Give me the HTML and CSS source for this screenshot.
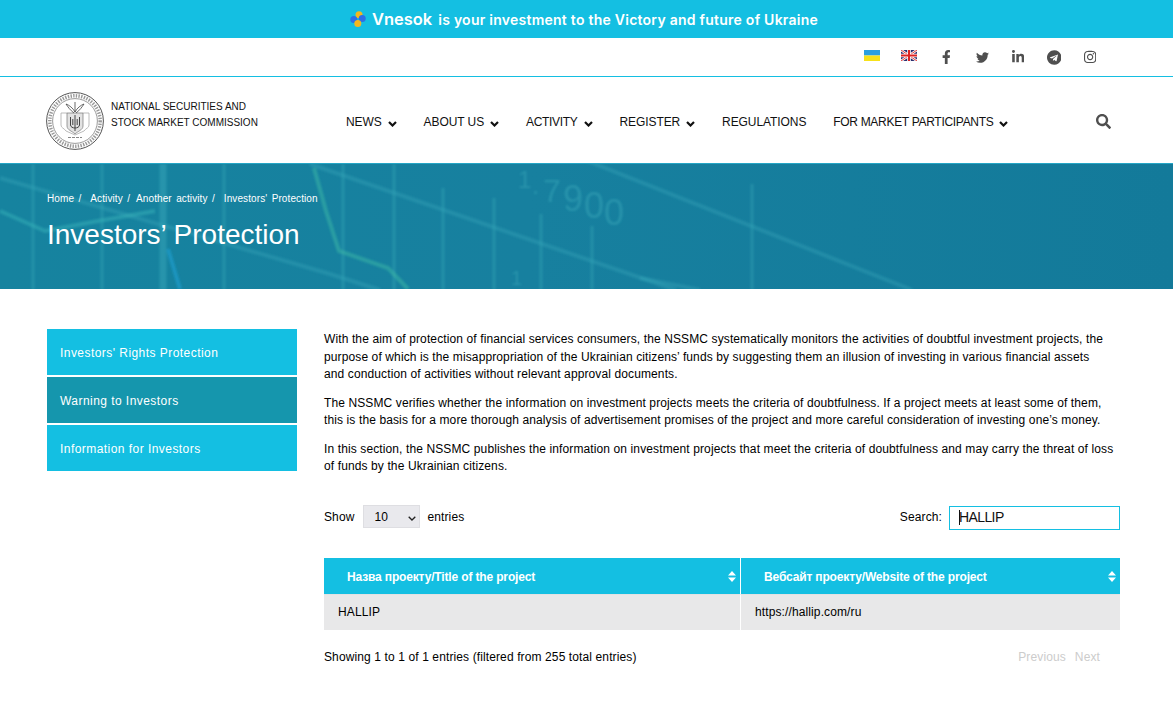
FILE: index.html
```html
<!DOCTYPE html>
<html lang="en">
<head>
<meta charset="utf-8">
<title>Investors' Protection</title>
<link rel="stylesheet" href="styles.css">
</head>
<body>
<div class="banner">
  <svg class="banner-logo" viewBox="0 0 16 16" width="16" height="16"><circle cx="9" cy="3.8" r="3.5" fill="#f4b71e"/><circle cx="3.8" cy="8.600" r="3.500" fill="#2c6fe8"/><circle cx="12.200" cy="7.400" r="3.500" fill="#2c6fe8"/><circle cx="7.800" cy="12.400" r="3.500" fill="#f4b71e"/></svg>
  <span class="banner-brand">Vnesok</span>
  <span class="banner-text">is your investment to the Victory and future of Ukraine</span>
</div>
<div class="topbar">
  <svg class="flag flag-ua" viewBox="0 0 16 11" width="16" height="11"><rect width="16" height="5.5" fill="#2a9fe0"/><rect y="5.5" width="16" height="5.5" fill="#f7e11a"/></svg>
  <svg class="flag flag-uk" viewBox="0 0 16 11" width="16" height="11"><rect width="16" height="11" fill="#2b2f6f"/><path d="M0 0l16 11M16 0L0 11" stroke="#fff" stroke-width="2.4"/><path d="M0 0l16 11M16 0L0 11" stroke="#d22" stroke-width=".9"/><path d="M8 0v11M0 5.5h16" stroke="#fff" stroke-width="3.6"/><path d="M8 0v11M0 5.5h16" stroke="#d22" stroke-width="2"/></svg>
  <a class="social"><svg viewBox="0 0 320 512" height="14"><path d="M279.14 288l14.22-92.66h-88.91v-60.13c0-25.35 12.42-50.06 52.24-50.06h40.42V6.26S260.43 0 225.36 0c-73.22 0-121.08 44.38-121.08 124.72v70.62H22.89V288h81.39v224h100.17V288z"/></svg></a>
  <a class="social"><svg viewBox="0 0 512 512" height="13"><path d="M459.37 151.716c.325 4.548.325 9.097.325 13.645 0 138.72-105.583 298.558-298.558 298.558-59.452 0-114.68-17.219-161.137-47.106 8.447.974 16.568 1.299 25.34 1.299 49.055 0 94.213-16.568 130.274-44.832-46.132-.975-84.792-31.188-98.112-72.772 6.498.974 12.995 1.624 19.818 1.624 9.421 0 18.843-1.3 27.614-3.573-48.081-9.747-84.143-51.98-84.143-102.985v-1.299c13.969 7.797 30.214 12.67 47.431 13.319-28.264-18.843-46.781-51.005-46.781-87.391 0-19.492 5.197-37.36 14.294-52.954 51.655 63.675 129.3 105.258 216.365 109.807-1.624-7.797-2.599-15.918-2.599-24.04 0-57.828 46.782-104.934 104.934-104.934 30.213 0 57.502 12.67 76.67 33.137 23.715-4.548 46.456-13.32 66.599-25.34-7.798 24.366-24.366 44.833-46.132 57.827 21.117-2.273 41.584-8.122 60.426-16.243-14.292 20.791-32.161 39.308-52.628 54.253z"/></svg></a>
  <a class="social"><svg viewBox="0 0 448 512" height="14"><path d="M100.28 448H7.4V148.9h92.88zM53.79 108.1C24.09 108.1 0 83.5 0 53.8a53.79 53.79 0 0 1 107.58 0c0 29.7-24.1 54.3-53.79 54.3zM447.9 448h-92.68V302.4c0-34.7-.7-79.2-48.29-79.2-48.29 0-55.69 37.7-55.69 76.7V448h-92.78V148.9h89.08v40.8h1.3c12.4-23.5 42.69-48.3 87.88-48.3 94 0 111.28 61.9 111.28 142.3V448z"/></svg></a>
  <a class="social"><svg viewBox="0 0 496 512" height="15"><path d="M248 8C111 8 0 119 0 256s111 248 248 248 248-111 248-248S385 8 248 8zm121.8 169.9l-40.7 191.8c-3 13.6-11.1 16.9-22.4 10.5l-62-45.7-29.9 28.8c-3.3 3.3-6.1 6.1-12.5 6.1l4.4-63.1 114.9-103.8c5-4.4-1.1-6.9-7.7-2.5l-142 89.4-61.2-19.1c-13.3-4.2-13.6-13.3 2.8-19.7l239.1-92.2c11.1-4 20.8 2.7 17.2 19.5z"/></svg></a>
  <a class="social"><svg viewBox="0 0 448 512" height="14"><path d="M224.1 141c-63.6 0-114.9 51.3-114.9 114.9s51.3 114.9 114.9 114.9S339 319.5 339 255.9 287.7 141 224.1 141zm0 189.6c-41.1 0-74.7-33.5-74.7-74.7s33.5-74.7 74.7-74.7 74.7 33.5 74.7 74.7-33.6 74.7-74.7 74.7zm146.4-194.3c0 14.9-12 26.8-26.8 26.8-14.9 0-26.8-12-26.8-26.8s12-26.8 26.8-26.8 26.8 12 26.8 26.8zm76.1 27.2c-1.7-35.9-9.9-67.7-36.2-93.9-26.2-26.2-58-34.4-93.9-36.2-37-2.1-147.9-2.1-184.9 0-35.8 1.7-67.6 9.9-93.9 36.1s-34.4 58-36.2 93.9c-2.1 37-2.1 147.9 0 184.9 1.7 35.9 9.9 67.7 36.2 93.9s58 34.4 93.9 36.2c37 2.1 147.9 2.1 184.9 0 35.9-1.7 67.7-9.9 93.9-36.2 26.2-26.2 34.4-58 36.2-93.9 2.1-37 2.1-147.8 0-184.8zM398.8 388c-7.8 19.6-22.9 34.7-42.6 42.6-29.5 11.7-99.5 9-132.1 9s-102.7 2.6-132.1-9c-19.6-7.8-34.7-22.9-42.6-42.6-11.7-29.5-9-99.5-9-132.1s-2.6-102.7 9-132.1c7.8-19.6 22.9-34.7 42.6-42.6 29.5-11.7 99.5-9 132.1-9s102.7-2.6 132.1 9c19.6 7.8 34.7 22.9 42.6 42.6 11.7 29.5 9 99.5 9 132.1s2.7 102.7-9 132.1z"/></svg></a>
</div>
<header class="header">
  <div class="brand">
    <svg class="seal" viewBox="0 0 58 58" width="58" height="58" fill="none" stroke="#555">
      <circle cx="29" cy="29" r="28.400" stroke-width="1"/>
      <circle cx="29" cy="29" r="25.200" stroke-width="3.500" stroke-dasharray="1.400 1.300" stroke="#999"/>
      <circle cx="29" cy="29" r="22.400" stroke-width=".6"/>
      <path d="M15 21h6M37 21h6M15 21v12c0 3 3 3 5 6l9 4 9-4c2-3 5-3 5-6V21" stroke="#aaa" stroke-width=".8"/>
      <path d="M21 21h16v13c0 4-5 5-8 8-3-3-8-4-8-8z" fill="#e2e2e2" stroke="#777" stroke-width=".7"/>
      <path d="M29 23v16M24.500 25v8c0 2 2.500 3 4.500 3s4.500-1 4.500-3v-8M26.800 27v6M31.200 27v6" stroke="#444" stroke-width="1"/>
      <path d="M29 20c-2-4-6-7-9-8 2 3 4 6 8 9M29 20c2-4 6-7 9-8-2 3-4 6-8 9M29 10v10" stroke="#444" stroke-width=".8"/>
      <path d="M22 45.500h14" stroke="#888" stroke-width="1.200" stroke-dasharray="3 1"/>
    </svg>
    <div class="brand-name">NATIONAL SECURITIES AND<br>STOCK MARKET COMMISSION</div>
  </div>
  <nav class="nav">
    <a class="nav-item">NEWS<svg class="chev" viewBox="0 0 9 6" width="9" height="6"><path d="M1 1l3.500 3.500L8 1"/></svg></a>
    <a class="nav-item">ABOUT US<svg class="chev" viewBox="0 0 9 6" width="9" height="6"><path d="M1 1l3.500 3.500L8 1"/></svg></a>
    <a class="nav-item tight">ACTIVITY<svg class="chev" viewBox="0 0 9 6" width="9" height="6"><path d="M1 1l3.500 3.500L8 1"/></svg></a>
    <a class="nav-item">REGISTER<svg class="chev" viewBox="0 0 9 6" width="9" height="6"><path d="M1 1l3.500 3.500L8 1"/></svg></a>
    <a class="nav-item">REGULATIONS</a>
    <a class="nav-item tight">FOR MARKET PARTICIPANTS<svg class="chev" viewBox="0 0 9 6" width="9" height="6"><path d="M1 1l3.500 3.500L8 1"/></svg></a>
  </nav>
  <svg class="search-icon" viewBox="0 0 512 512" width="15" height="15"><path d="M505 442.7L405.3 343c-4.500-4.500-10.600-7-17-7H372c27.600-35.300 44-79.700 44-128C416 93.100 322.900 0 208 0S0 93.100 0 208s93.100 208 208 208c48.300 0 92.700-16.400 128-44v16.300c0 6.400 2.500 12.500 7 17l99.700 99.700c9.400 9.400 24.600 9.400 33.900 0l28.300-28.300c9.400-9.400 9.400-24.600.1-34zM208 336c-70.700 0-128-57.200-128-128 0-70.700 57.200-128 128-128 70.700 0 128 57.200 128 128 0 70.700-57.200 128-128 128z"/></svg>
</header>
<section class="hero">
  <svg class="hero-bg" viewBox="0 0 1173 126" width="1173" height="126" fill="none">
    <defs><filter id="soft" x="-5%" y="-5%" width="110%" height="110%"><feGaussianBlur stdDeviation="0.900"/></filter></defs>
    <g filter="url(#soft)">
      <g stroke="#3fb0bf" stroke-opacity=".32" stroke-width="3">
        <path d="M33 0v126M102 0v126M224 0v126M343 0v126M394 0v126M443 24v102M494 34v92M541 50v76M592 62v64M752 20v106"/>
      </g>
      <path d="M163 0v126" stroke="#3fb0bf" stroke-opacity=".4" stroke-width="7"/>
      <g stroke="#3fb0bf" stroke-opacity=".3" stroke-width="4">
        <path d="M0 14L330 110 380 126"/>
        <path d="M310 0L676 126"/>
        <path d="M570 -10L912 126"/>
        <path d="M640 114L700 126"/>
      </g>
      <path d="M314 4L326 47 339 87 388 104 408 125" stroke="#42c0a8" stroke-opacity=".45" stroke-width="4"/>
      <path d="M0 47L45 67 98 57 155 47" stroke="#3cb8bc" stroke-opacity=".45" stroke-width="4"/>
      <path d="M168 85L174 105 180 125" stroke="#1e9ed0" stroke-opacity=".65" stroke-width="4"/>
      <text class="hero-num"><tspan x="518" y="24" font-size="24">1</tspan><tspan x="532" y="30" font-size="26">.</tspan><tspan x="543" y="38" font-size="32">7</tspan><tspan x="563" y="47" font-size="36">9</tspan><tspan x="584" y="54" font-size="36">0</tspan><tspan x="604" y="61" font-size="36">0</tspan></text>
      <text class="hero-num" x="511" y="121" font-size="20">1</text>
    </g>
  </svg>
  <div class="hero-inner">
    <div class="crumbs"><a class="crumb">Home /</a><a class="crumb crumb-near">Activity /</a><a class="crumb">Another activity /</a><a class="crumb">Investors' Protection</a></div>
    <h1 class="title">Investors’ Protection</h1>
  </div>
</section>
<main class="main">
  <aside class="side">
    <a class="side-item">Investors' Rights Protection</a>
    <a class="side-item active">Warning to Investors</a>
    <a class="side-item">Information for Investors</a>
  </aside>
  <div class="content">
    <p class="para para-narrow">With the aim of protection of financial services consumers, the NSSMC systematically monitors the activities of doubtful investment projects, the purpose of which is the misappropriation of the Ukrainian citizens’ funds by suggesting them an illusion of investing in various financial assets and conduction of activities without relevant approval documents.</p>
    <p class="para">The NSSMC verifies whether the information on investment projects meets the criteria of doubtfulness. If a project meets at least some of them, this is the basis for a more thorough analysis of advertisement promises of the project and more careful consideration of investing one’s money.</p>
    <p class="para">In this section, the NSSMC publishes the information on investment projects that meet the criteria of doubtfulness and may carry the threat of loss of funds by the Ukrainian citizens.</p>
    <div class="controls">
      <label class="length">Show <select class="length-select"><option>10</option><option>25</option></select> entries</label>
      <label class="filter">Search: <span class="filter-box"><input class="filter-input" value="HALLIP"><span class="caret"></span></span></label>
    </div>
    <table class="table">
      <thead><tr>
        <th class="th-a">Назва проекту/Title of the project<svg class="sort" viewBox="0 0 8 11" width="8" height="11"><path d="M4 0L8 4.500H0zM4 11L0 6.500h8z"/></svg></th>
        <th class="th-b">Вебсайт проекту/Website of the project<svg class="sort" viewBox="0 0 8 11" width="8" height="11"><path d="M4 0L8 4.500H0zM4 11L0 6.500h8z"/></svg></th>
      </tr></thead>
      <tbody><tr><td>HALLIP</td><td>https://hallip.com/ru</td></tr></tbody>
    </table>
    <div class="foot">
      <div>Showing 1 to 1 of 1 entries (filtered from 255 total entries)</div>
      <div class="pager"><a class="page">Previous</a><a class="page">Next</a></div>
    </div>
  </div>
</main>
</body>
</html>
```
FILE: styles.css
```css
* { box-sizing: border-box; }
html, body { margin: 0; padding: 0; }
body { font-family: "Liberation Sans", Arial, sans-serif; font-size: 12px; color: #000; background: #fff; }
.banner { height: 38px; padding-right: 5px; background: #14bfe2; color: #fff; display: flex; align-items: center; justify-content: center; font-family: Inter, "Liberation Sans", sans-serif; }
.banner-logo { flex: none; margin-right: 6px; }
.banner-brand { font-size: 16.500px; font-weight: 600; margin-right: 6px; }
.banner-text { font-size: 14px; font-weight: 600; letter-spacing: .25px; }
.topbar { height: 39px; border-bottom: 1px solid #14bfe2; display: flex; align-items: center; padding-left: 864px; }
.flag { flex: none; margin-bottom: 3px; }
.flag-uk { margin-left: 21px; margin-right: 11px; }
.social { flex: none; width: 36px; height: 16px; display: flex; align-items: center; justify-content: center; }
.social svg { fill: #4f4f4f; display: block; }
.header { height: 86px; display: flex; align-items: center; padding: 0 62px 0 46px; }
.brand { display: flex; align-items: center; width: 300px; flex: none; margin-top: 2px; }
.seal { flex: none; margin-right: 7px; }
.brand-name { font-size: 10px; line-height: 16px; margin-top: -12px; color: #111; }
.nav { display: flex; gap: 26.900px; flex: 1; font-size: 12px; margin-top: 4px; }
.nav-item { display: flex; align-items: center; color: #111; letter-spacing: -.08px; }
.nav-item.tight { letter-spacing: -.3px; }
.chev { margin: 3px 0 0 6px; fill: none; stroke: #111; stroke-width: 2.200; }
.search-icon { flex: none; fill: #4f4f4f; margin-top: 3px; }
.hero { position: relative; height: 126px; background: linear-gradient(90deg, #16839f, #17809f 45%, #137a9a); border-top: 1px solid #25a6c6; overflow: hidden; color: #fff; }
.hero-bg { position: absolute; left: 0; top: 0; }
.hero-num { font-family: "Liberation Sans", sans-serif; fill: #3fb0bf; fill-opacity: .4; }
.hero-inner { position: relative; padding: 29px 47px 0; }
.crumbs { display: flex; font-size: 10px; line-height: 12px; letter-spacing: .1px; word-spacing: 1.500px; }
.crumb { margin-right: 9px; }
.crumb-near { margin-right: 6px; }
.title { margin: 13px 0 0; font-size: 28px; font-weight: 400; line-height: 34px; }
.main { display: flex; padding: 40px 53px 0 47px; gap: 27px; }
.side { width: 250px; flex: none; display: flex; flex-direction: column; gap: 1.500px; }
.side-item { height: 46.400px; display: flex; align-items: center; padding: 2px 13px 0; background: #14bfe2; color: #fff; font-size: 12px; letter-spacing: .45px; }
.side-item.active { background: #1596ad; }
.content { flex: 1; min-width: 0; padding-top: 2px; letter-spacing: .115px; }
.para { margin: 0 0 11px; line-height: 17.500px; }
.para-narrow { padding-right: 10px; }
.controls { display: flex; justify-content: space-between; align-items: center; margin-top: 28px; height: 26px; }
.length { display: flex; align-items: center; gap: 7px; }
.length-select { appearance: none; width: 57px; height: 23px; margin-left: 2px; font: 12px "Liberation Sans", sans-serif; background: #e9e9ed url("data:image/svg+xml,%3Csvg xmlns='http://www.w3.org/2000/svg' width='8' height='5'%3E%3Cpath d='M.7.7L4 4l3.300-3.300' fill='none' stroke='%23222' stroke-width='1.300'/%3E%3C/svg%3E") no-repeat 44px 10px; border: 1px solid #dedee2; padding-left: 10px; border-radius: 0; color: #000; }
.filter { display: flex; align-items: center; gap: 7px; }
.filter-box { position: relative; display: block; margin-top: 2px; }
.filter-input { display: block; width: 171px; height: 24px; border: 1px solid #14bfe2; outline: none; padding: 0 9px 2px; font: 14px "Liberation Sans", sans-serif; letter-spacing: -.6px; color: #111; }
.caret { position: absolute; left: 10px; top: 4px; width: 1px; height: 15px; background: #111; }
.table { width: 100%; margin-top: 28px; border-collapse: separate; border-spacing: 0; table-layout: fixed; }
.table th { height: 36px; background: #14bfe2; color: #fff; text-align: left; font-size: 12px; font-weight: 700; letter-spacing: -.15px; position: relative; padding: 2px 23px 0; }
.th-a { width: 417px; border-right: 1px solid #fff; }
.sort { position: absolute; right: 4px; top: 13px; fill: #fff; }
.table td { height: 36px; background: #e8e8e9; padding: 0 14px; border-top: 1px solid #e2e2e3; }
.table td:first-child { border-right: 1px solid #fff; }
.foot { display: flex; justify-content: space-between; margin-top: 20px; line-height: 14px; }
.pager { display: flex; gap: 9px; padding-right: 20px; color: #ccc; }
```
